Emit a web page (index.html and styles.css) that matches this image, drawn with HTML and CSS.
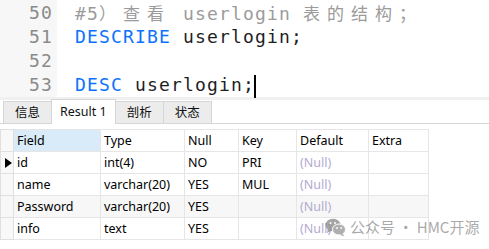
FILE: index.html
```html
<!DOCTYPE html>
<html lang="zh-CN">
<head>
  <meta charset="UTF-8" />
  <title>userlogin</title>
  <link rel="stylesheet" href="styles.css">
</head>
<body>
  <div class="editor">
    <div class="gutter">
      <div class="ln">50</div>
      <div class="ln">51</div>
      <div class="ln">52</div>
      <div class="ln">53</div>
    </div>
    <div class="code">
      <div class="line comment">#5<span class="wide">）查看</span> userlogin <span class="wide">表的结构；</span></div>
      <div class="line"><span class="kw">DESCRIBE</span> userlogin;</div>
      <div class="line"></div>
      <div class="line"><span class="kw">DESC</span> userlogin;<span class="caret"></span></div>
    </div>
  </div>
  <div class="divider"></div>

  <div class="tabs">
    <div class="tab">信息</div>
    <div class="tab active">Result 1</div>
    <div class="tab">剖析</div>
    <div class="tab">状态</div>
  </div>

  <div class="result">
    <table class="grid">
      <colgroup>
        <col class="c-ind"><col class="c-field"><col class="c-type"><col class="c-null">
        <col class="c-key"><col class="c-default"><col class="c-extra">
      </colgroup>
      <thead>
        <tr>
          <th class="ind"></th>
          <th class="sorted">Field</th>
          <th>Type</th>
          <th>Null</th>
          <th>Key</th>
          <th>Default</th>
          <th>Extra</th>
        </tr>
      </thead>
      <tbody>
        <tr>
          <td class="ind"><span class="pointer"></span></td>
          <td>id</td><td>int(4)</td><td>NO</td><td>PRI</td><td class="null">(Null)</td><td></td>
        </tr>
        <tr>
          <td class="ind"></td>
          <td>name</td><td>varchar(20)</td><td>YES</td><td>MUL</td><td class="null">(Null)</td><td></td>
        </tr>
        <tr class="alt">
          <td class="ind"></td>
          <td>Password</td><td>varchar(20)</td><td>YES</td><td></td><td class="null">(Null)</td><td></td>
        </tr>
        <tr>
          <td class="ind"></td>
          <td>info</td><td>text</td><td>YES</td><td></td><td class="null">(Null)</td><td></td>
        </tr>
      </tbody>
    </table>
  </div>

  <div class="watermark">
    <svg class="wechat" width="21" height="19" viewBox="0 0 21 19">
      <ellipse cx="8" cy="7" rx="7.5" ry="6.3" fill="#8f8f8f"/>
      <path d="M3 11 L2 15 L6.5 12.5 Z" fill="#8f8f8f"/>
      <ellipse cx="14" cy="11.5" rx="6.5" ry="5.5" fill="#9c9c9c" stroke="#ffffff" stroke-width="1"/>
      <path d="M17.5 15.5 L19.5 18.5 L15 16.8 Z" fill="#9c9c9c"/>
      <circle cx="5.5" cy="5" r="1" fill="#ffffff"/>
      <circle cx="10" cy="5" r="1" fill="#ffffff"/>
      <circle cx="12" cy="10" r="0.9" fill="#ffffff"/>
      <circle cx="16.2" cy="10" r="0.9" fill="#ffffff"/>
    </svg>
    <span>公众号 · HMC开源</span>
  </div>
</body>
</html>
```

FILE: styles.css
```css
body {
  margin: 0;
  background-color: #ffffff;
  font-family: "Noto Sans", "Noto Sans CJK SC", sans-serif;
  position: relative;
  width: 489px;
  height: 249px;
  overflow: hidden;
}

/* Editor */
.editor {
  display: flex;
  height: 97px;
  font-family: "DejaVu Sans Mono", monospace;
  font-size: 18px;
  letter-spacing: 1.16px;
}
.gutter {
  width: 57px;
  background-color: #f7f7f7;
  padding-top: 1px;
}
.ln {
  height: 24px;
  line-height: 24px;
  text-align: right;
  padding-right: 4px;
  color: #8a8a8a;
}
.code {
  padding-top: 1px;
  padding-left: 18px;
  flex: 1;
}
.line {
  height: 24px;
  line-height: 24px;
  color: #1e1e1e;
  white-space: pre;
}
.comment {
  color: #9b9b9b;
}
.wide {
  font-family: "Noto Sans CJK SC", sans-serif;
  font-size: 17px;
  letter-spacing: 7px;
}
.kw {
  color: #0a72ff;
}
.caret {
  display: inline-block;
  width: 2px;
  height: 23px;
  background-color: #000;
  vertical-align: middle;
  margin-left: -1px;
}
.divider {
  height: 3px;
  background-color: #f0f0f0;
}

/* Tabs */
.tabs {
  display: flex;
  align-items: flex-end;
  height: 23px;
  padding-left: 3px;
  border-bottom: 1px solid #d6d6d6;
  font-size: 12.5px;
}
.tab {
  height: 21px;
  line-height: 21px;
  padding: 0 11px;
  background-color: #ececec;
  border: 1px solid #d6d6d6;
  border-bottom: none;
  color: #111;
  margin-right: -1px;
}
.tab.active {
  height: 24px;
  line-height: 24px;
  background-color: #ffffff;
  margin-bottom: -1px;
  padding: 0 8px;
  position: relative;
}

/* Result grid */
.result {
  padding-top: 5px;
}
.grid {
  border-collapse: collapse;
  table-layout: fixed;
  width: 428px;
  font-size: 12.5px;
}
.c-ind { width: 13px; }
.c-field { width: 87px; }
.c-type { width: 84px; }
.c-null { width: 54px; }
.c-key { width: 58px; }
.c-default { width: 72px; }
.c-extra { width: 60px; }
.grid th,
.grid td {
  height: 21px;
  padding: 0 3px;
  border: 1px solid #e6e6e6;
  text-align: left;
  font-weight: normal;
  color: #000;
  white-space: nowrap;
  overflow: hidden;
}
.grid th.sorted {
  background-color: #d9eaf8;
}
.grid .ind {
  padding: 0;
  background-color: #f8f8f8;
  border-color: #e0e0e0;
}
.grid tr.alt td {
  background-color: #f7f7f7;
}
.grid td.null {
  color: #b2abd0;
}
.pointer {
  display: block;
  width: 0;
  height: 0;
  margin-left: 4px;
  border-left: 7px solid #000;
  border-top: 5px solid transparent;
  border-bottom: 5px solid transparent;
}

/* Watermark overlay */
.watermark {
  position: absolute;
  left: 325px;
  top: 217px;
  display: flex;
  align-items: center;
  gap: 4px;
  font-family: "Noto Sans CJK SC", sans-serif;
  font-size: 15px;
  line-height: 20px;
  color: rgba(110, 110, 110, 0.6);
}
.wechat {
  opacity: 0.8;
}
```
